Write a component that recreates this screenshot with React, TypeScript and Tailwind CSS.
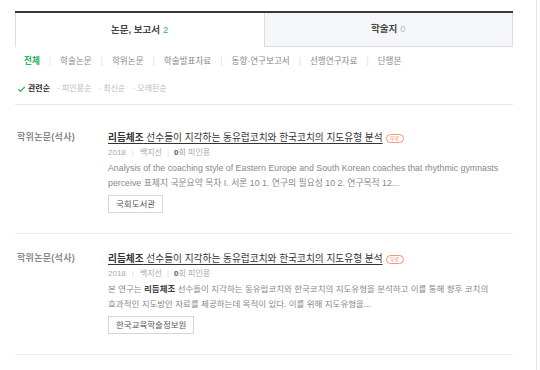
import { Check } from 'lucide-react';

const font = { fontFamily: "'Liberation Sans', 'Noto Sans CJK KR', sans-serif" };

const categories = ['학술논문', '학위논문', '학술발표자료', '동향·연구보고서', '선행연구자료', '단행본'];
const sorts = ['피인용순', '최신순', '오래된순'];

type Item = {
  label: string;
  rest: string;
  year: string;
  author: string;
  abs: React.ReactNode;
  absSize: string;
  source: string;
  top: string;
};

const items: Item[] = [
  {
    label: '학위논문(석사)',
    rest: ' 선수들이 지각하는 동유럽코치와 한국코치의 지도유형 분석',
    year: '2018',
    author: '백지선',
    abs: (
      <>
        Analysis of the coaching style of Eastern Europe and South Korean coaches that rhythmic gymnasts
        <br />
        perceive 표제지 국문요약 목차 I. 서론 10 1. 연구의 필요성 10 2. 연구목적 12...
      </>
    ),
    absSize: 'text-[8.8px]',
    source: '국회도서관',
    top: 'pt-[26px]',
  },
  {
    label: '학위논문(석사)',
    rest: ' 선수들이 지각하는 동유럽코치와 한국코치의 지도유형 분석',
    year: '2018',
    author: '백지선',
    abs: (
      <>
        본 연구는 <b className="text-[#444]">리듬체조</b> 선수들이 지각하는 동유럽코치와 한국코치의 지도유형을 분석하고 이를 통해 향후 코치의
        <br />
        효과적인 지도방안 자료를 제공하는데 목적이 있다. 이를 위해 지도유형을...
      </>
    ),
    absSize: 'text-[8.5px]',
    source: '한국교육학술정보원',
    top: 'pt-[18px]',
  },
];

function Result({ item }: { item: Item }) {
  return (
    <div className={`flex border-b border-[#ebebeb] pb-[20px] ${item.top}`}>
      <div className="w-[93px] shrink-0 pl-[2px] text-[9px] leading-[12px] font-bold tracking-[0.3px] text-[#8a8a8a]">
        {item.label}
      </div>
      <div className="flex-1">
        <div className="flex h-[14px] items-center">
          <span className="text-[9.7px] leading-[14px] text-[#333] underline underline-offset-2">
            <b>리듬체조</b>
            {item.rest}
          </span>
          <span className="ml-[3px] flex h-[9px] w-[18px] items-center justify-center rounded-full border border-[#f39578] text-[5px] leading-none text-[#f26f4c]">
            무료
          </span>
        </div>
        <div className="flex h-[15px] items-center text-[8px] text-[#aaa]">
          <span>{item.year}</span>
          <span className="mx-[6px] text-[#ddd]">|</span>
          <span>{item.author}</span>
          <span className="mx-[5px] text-[#ddd]">|</span>
          <span>
            <b className="text-[#555]">0</b>회 피인용
          </span>
        </div>
        <p className={`mt-[1px] whitespace-nowrap leading-[14.5px] text-[#888] ${item.absSize}`}>{item.abs}</p>
        <div className="mt-[5px] flex">
          <span className="flex h-[18px] items-center border border-[#d6d6d6] px-[7px] text-[8.5px] text-[#555]">
            {item.source}
          </span>
        </div>
      </div>
    </div>
  );
}

export default function App() {
  return (
    <div style={font} className="flex min-h-screen bg-white">
      <div className="w-[536px] shrink-0 pl-[15px] pr-[23px] pt-[11px]">
        <div className="flex h-[36px] border-t-2 border-[#3a3a3a]">
          <div className="flex flex-1 items-center justify-center border-l border-[#dcdcdc] bg-white text-[9.5px] font-bold text-[#444]">
            논문, 보고서 <span className="ml-[3px] font-normal text-[#2bb45a]">2</span>
          </div>
          <div className="flex flex-1 items-center justify-center border border-t-0 border-[#dcdcdc] bg-[#f5f6f8] text-[9.5px] font-bold text-[#444]">
            학술지 <span className="ml-[3px] font-normal text-[#bbb]">0</span>
          </div>
        </div>

        <div className="flex h-[28px] items-center pl-[9px] text-[8.6px] text-[#888]">
          <span className="font-bold text-[#2bb45a]">전체</span>
          {categories.map((c) => (
            <span key={c} className="flex items-center">
              <span className="mx-[9px] text-[#ddd]">|</span>
              {c}
            </span>
          ))}
        </div>

        <div className="flex h-[30px] items-center border-b border-[#e6e6e6] pb-px pl-[2px] text-[8px] text-[#bbb]">
          <Check size={9} strokeWidth={3} className="mr-[2px] text-[#2bb45a]" />
          <span className="font-bold text-[#333]">관련순</span>
          {sorts.map((s) => (
            <span key={s} className="ml-[7px]">
              · {s}
            </span>
          ))}
        </div>

        {items.map((it, i) => (
          <Result key={i} item={it} />
        ))}
      </div>
      <div className="flex-1 border-l border-[#e6e6e6]" />
    </div>
  );
}
